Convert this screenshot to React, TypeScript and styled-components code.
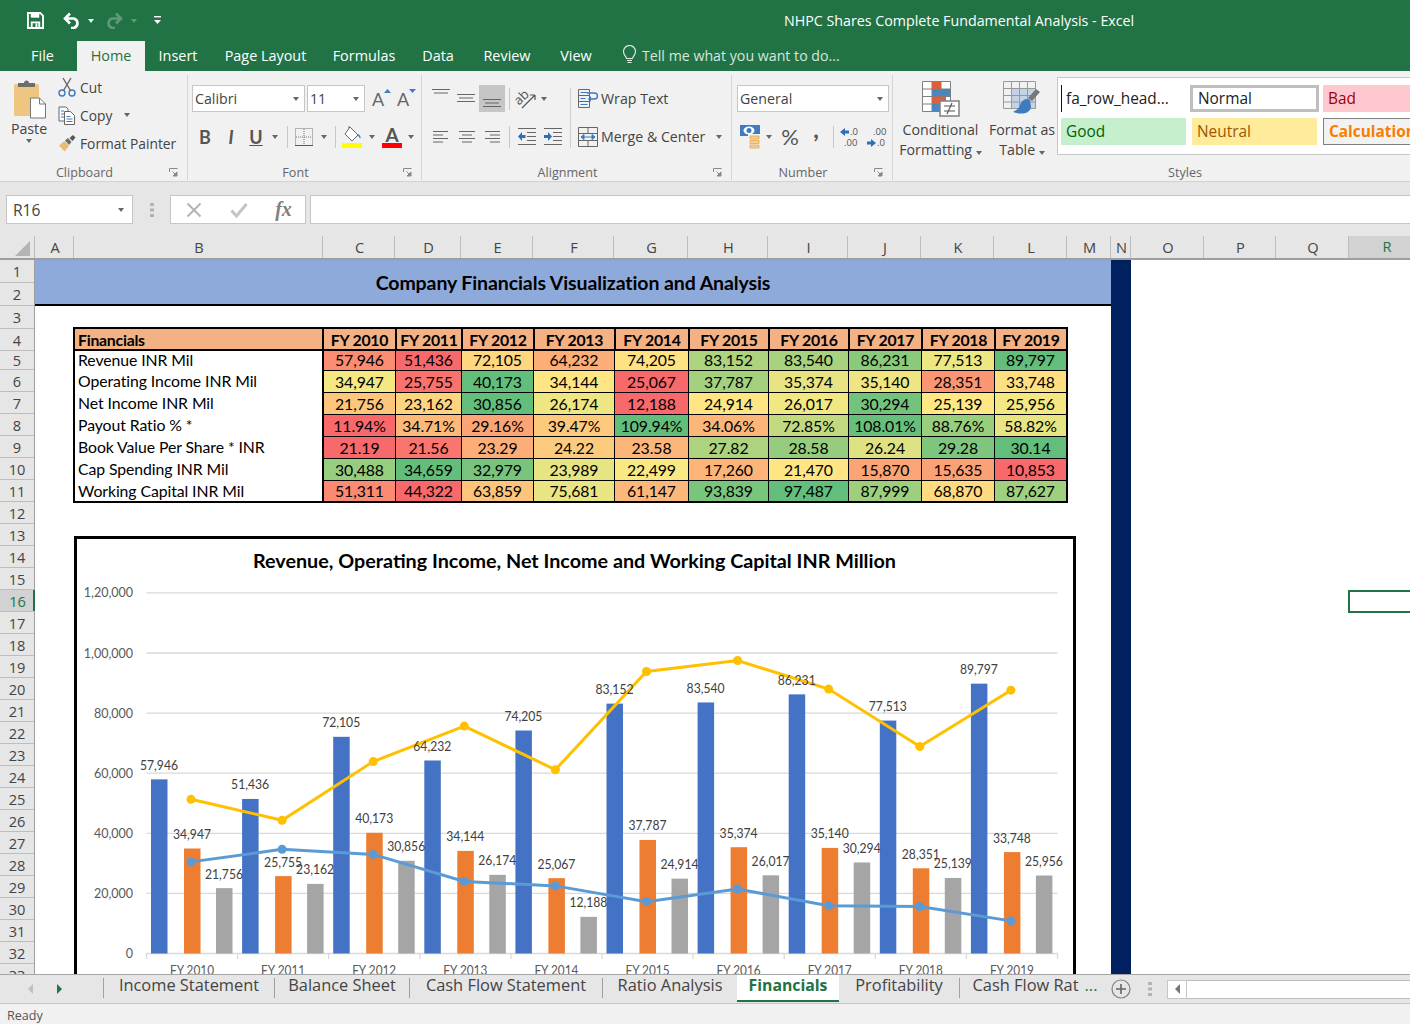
import React from 'react';
import styled, { createGlobalStyle } from 'styled-components';

const calibri = '"Lato", "Liberation Sans", sans-serif';
const segoe = '"Open Sans", "Liberation Sans", sans-serif';
const green = '#217346';

const GlobalStyle = createGlobalStyle`
  html, body { margin: 0; padding: 0; background: #fff; }
  body { font-family: ${segoe}; color: #444; }
  * { box-sizing: border-box; }
`;

const Window = styled.div`
  width: 1410px;
  height: 1024px;
  display: flex;
  flex-direction: column;
  overflow: hidden;
`;

/* title bar + tabs */
const TitleBar = styled.div`
  height: 41px;
  background: ${green};
  display: grid;
  grid-template-columns: 784px 1fr;
  align-items: center;
  color: #fff;
`;
const Qat = styled.div`
  display: flex;
  align-items: center;
  padding-left: 26px;
`;
const QatButton = styled.span<{ $w: number; $ml?: number }>`
  width: ${p => p.$w}px;
  margin-left: ${p => p.$ml ?? 0}px;
  display: flex;
  align-items: center;
  justify-content: center;
`;
const WindowTitle = styled.div`
  font-size: 14.25px;
  white-space: nowrap;
`;
const TabStrip = styled.div`
  height: 30px;
  background: ${green};
  display: flex;
  align-items: stretch;
  padding-left: 8px;
  font-size: 14.4px;
  color: #fff;
`;
const RibbonTab = styled.div<{ $w: number; $active?: boolean }>`
  width: ${p => p.$w}px;
  display: flex;
  align-items: center;
  justify-content: center;
  white-space: nowrap;
  padding-bottom: 2px;
  background: ${p => (p.$active ? '#f1f1f1' : 'transparent')};
  color: ${p => (p.$active ? green : '#fff')};
`;
const TellMe = styled.div`
  display: flex;
  align-items: center;
  gap: 5px;
  margin-left: 16px;
  padding-bottom: 2px;
  font-size: 14.2px;
  color: #d7e6dc;
  white-space: nowrap;
`;

/* ribbon */
const Ribbon = styled.div`
  height: 111px;
  background: #f1f1f1;
  border-bottom: 1px solid #d2d2d2;
  display: flex;
  padding: 4px 0 1px;
  font-size: 14.2px;
  color: #444;
`;
const Group = styled.div<{ $w: number; $last?: boolean }>`
  width: ${p => p.$w}px;
  flex: none;
  display: flex;
  flex-direction: column;
  border-right: ${p => (p.$last ? 'none' : '1px solid #d4d4d4')};
`;
const GroupBody = styled.div`
  flex: 1;
  display: flex;
  min-height: 0;
`;
const GroupFooter = styled.div<{ $w?: number }>`
  height: 16px;
  display: grid;
  grid-template-columns: 1fr 18px;
  align-items: center;
  width: ${p => (p.$w ? `${p.$w}px` : 'auto')};
  font-size: 12.6px;
  color: #666;
  text-align: center;
`;
const Launcher = styled.span`
  display: flex;
  justify-content: flex-start;
`;
const PasteButton = styled.div`
  width: 50px;
  margin-left: 4px;
  display: flex;
  flex-direction: column;
  align-items: center;
  padding-top: 4px;
  font-size: 14.2px;
  line-height: 20px;
`;
const ClipColumn = styled.div`
  display: flex;
  flex-direction: column;
  margin-top: -2px;
  padding: 0 0 0 4px;
  font-size: 13.8px;
`;
const ClipRow = styled.div`
  height: 28px;
  display: flex;
  align-items: center;
  gap: 4px;
  white-space: nowrap;
`;
const Caret = styled.span<{ $gap?: number; $c?: string }>`
  display: inline-block;
  flex: none;
  width: 0;
  height: 0;
  margin-left: ${p => p.$gap ?? 0}px;
  border-left: 3.5px solid transparent;
  border-right: 3.5px solid transparent;
  border-top: 4px solid ${p => p.$c ?? '#666'};
`;
const StackColumn = styled.div<{ $pad: number }>`
  display: flex;
  flex-direction: column;
  padding: 10px 0 0 ${p => p.$pad}px;
`;
const ToolRow = styled.div<{ $top?: number }>`
  height: 27px;
  display: flex;
  align-items: center;
  margin-top: ${p => p.$top ?? 0}px;
`;
const Select = styled.div<{ $w: number }>`
  width: ${p => p.$w}px;
  height: 27px;
  background: #fff;
  border: 1px solid #c6c6c6;
  display: flex;
  align-items: center;
  justify-content: space-between;
  padding: 0 5px 0 2px;
  font-size: 14.2px;
  margin-right: 2px;
`;
const Tool = styled.span<{ $w: number; $on?: boolean; $ml?: number }>`
  width: ${p => p.$w}px;
  height: 27px;
  flex: none;
  margin-left: ${p => p.$ml ?? 0}px;
  display: flex;
  align-items: center;
  justify-content: center;
  background: ${p => (p.$on ? '#c6c6c6' : 'transparent')};
`;
const FontGlyph = styled.span<{ $b?: boolean; $i?: boolean; $u?: boolean; $s?: number; $lift?: number }>`
  font-family: ${calibri};
  font-size: ${p => p.$s ?? 18}px;
  font-weight: ${p => (p.$b ? 700 : 400)};
  font-style: ${p => (p.$i ? 'italic' : 'normal')};
  text-decoration: ${p => (p.$u ? 'underline' : 'none')};
  color: #555;
  margin-bottom: ${p => p.$lift ?? 0}px;
`;
const ResizeGlyph = styled.span`
  display: flex;
  align-items: flex-start;
  gap: 0;
  font-family: ${calibri};
  font-size: 18px;
  line-height: 22px;
  color: #666;
  svg { margin-top: 1px; }
`;
const ColorGlyph = styled.span<{ $bar: string }>`
  width: 20px;
  display: flex;
  flex-direction: column;
  align-items: center;
  font-family: ${calibri};
  font-size: 19px;
  font-weight: 700;
  line-height: 17px;
  color: #555;
  &::after {
    content: '';
    width: 20px;
    height: 5px;
    background: ${p => p.$bar};
  }
`;
const ToolSep = styled.span<{ $w: number }>`
  width: ${p => p.$w}px;
  height: 22px;
  flex: none;
  display: flex;
  justify-content: center;
  &::before {
    content: '';
    width: 1px;
    background: #c8c8c8;
  }
`;
const AlignDivider = styled.span`
  width: 1px;
  height: 60px;
  margin: 13px 7px 0 4px;
  background: #d0d0d0;
  flex: none;
`;
const WideAction = styled.div<{ $top?: number }>`
  height: 27px;
  display: flex;
  align-items: center;
  gap: 3px;
  margin-top: ${p => p.$top ?? 0}px;
  white-space: nowrap;
`;
const BigStyleButton = styled.div<{ $w: number }>`
  width: ${p => p.$w}px;
  flex: none;
  display: flex;
  flex-direction: column;
  align-items: center;
  padding-top: 6px;
  line-height: 20px;
  white-space: nowrap;
  svg { margin-bottom: 3px; }
`;
const Gallery = styled.div`
  margin: 2px 0 0 1px;
  width: 360px;
  height: 78px;
  background: #fff;
  border: 1px solid #c6c6c6;
  display: grid;
  grid-template-columns: 125px 129px 120px;
  grid-auto-rows: 27px;
  column-gap: 4px;
  row-gap: 6px;
  padding: 7px 0 0 3px;
  font-size: 15.4px;
`;
const StyleChip = styled.div<{ $bg?: string; $fg?: string; $border?: string; $bw?: number; $b?: boolean; $inset?: number }>`
  background: ${p => p.$bg ?? 'transparent'};
  color: ${p => p.$fg ?? '#222'};
  border: ${p => (p.$border ? `${p.$bw ?? 1}px solid ${p.$border}` : 'none')};
  font-weight: ${p => (p.$b ? 700 : 400)};
  margin: 0 ${p => p.$inset ?? 0}px;
  display: flex;
  align-items: center;
  padding-left: 5px;
  white-space: nowrap;
  overflow: hidden;
`;
const HeadChip = styled(StyleChip)`
  border-left: 1px solid #111;
  padding-left: 4px;
`;

/* formula bar */
const FormulaBar = styled.div`
  height: 54px;
  background: #e6e6e6;
  display: flex;
  align-items: flex-start;
  padding: 13px 0 0 6px;
`;
const NameBox = styled.div`
  width: 127px;
  height: 29px;
  background: #fff;
  border: 1px solid #c6c6c6;
  display: flex;
  align-items: center;
  justify-content: space-between;
  padding: 0 8px 0 6px;
  font-size: 15.6px;
`;
const Grip = styled.span`
  width: 37px;
  height: 29px;
  display: flex;
  align-items: center;
  justify-content: center;
`;
const SheetGrip = styled(Grip)`
  width: 24px;
  height: 28px;
`;
const FormulaButtons = styled.div`
  width: 136px;
  height: 29px;
  background: #fff;
  border: 1px solid #c6c6c6;
  display: grid;
  grid-template-columns: 45px 45px 45px;
  align-items: center;
  justify-items: center;
`;
const FxGlyph = styled.span`
  font-family: "Liberation Serif", serif;
  font-style: italic;
  font-weight: 700;
  font-size: 20px;
  color: #808080;
`;
const FormulaInput = styled.div`
  flex: 1;
  height: 29px;
  margin-left: 4px;
  background: #fff;
  border: 1px solid #c6c6c6;
  border-right: none;
`;

/* column + row headers */
const ColumnHeader = styled.div`
  height: 24px;
  background: #e6e6e6;
  display: flex;
  overflow: hidden;
  border-bottom: 2px solid #9f9f9f;
`;
const Corner = styled.div`
  width: 35px;
  flex: none;
  display: flex;
  align-items: flex-end;
  justify-content: flex-end;
  padding: 0 4px 2px 0;
  border-right: 1px solid #bdbdbd;
`;
const ColCell = styled.div<{ $w: number; $sel?: boolean }>`
  width: ${p => p.$w}px;
  flex: none;
  height: 24px;
  display: flex;
  align-items: center;
  justify-content: center;
  padding: 0 0 2px 2px;
  font-size: 14.6px;
  color: ${p => (p.$sel ? green : '#444')};
  background: ${p => (p.$sel ? '#d2d2d2' : 'transparent')};
  border-right: 1px solid #bdbdbd;
  border-bottom: ${p => (p.$sel ? `2px solid ${green}` : 'none')};
`;
const SheetBody = styled.div`
  height: 714px;
  display: flex;
  overflow: hidden;
  background: #fff;
`;
const RowHeaders = styled.div`
  width: 35px;
  flex: none;
  background: #e6e6e6;
  border-right: 1px solid #9f9f9f;
`;
const RowCell = styled.div<{ $h: number; $sel?: boolean }>`
  height: ${p => p.$h}px;
  display: flex;
  align-items: center;
  justify-content: center;
  font-size: 14.6px;
  border-bottom: 1px solid #bdbdbd;
  color: ${p => (p.$sel ? green : '#444')};
  background: ${p => (p.$sel ? '#d2d2d2' : 'transparent')};
  box-shadow: ${p => (p.$sel ? `inset -2px 0 0 ${green}` : 'none')};
  margin-right: ${p => (p.$sel ? '-1px' : '0')};
`;
const Canvas = styled.div`
  flex: 1;
  position: relative;
  display: grid;
  grid-template-columns: 1076px 20px 1fr;
`;
const MainColumn = styled.div`
  display: flex;
  flex-direction: column;
  min-width: 0;
`;
const NavyStrip = styled.div`
  background: #002060;
`;
const Banner = styled.div`
  height: 46px;
  background: #8eaadb;
  border-bottom: 2px solid #000;
  display: flex;
  align-items: center;
  justify-content: center;
  font-family: ${calibri};
  font-weight: 700;
  font-size: 19.5px;
  letter-spacing: -0.1px;
  color: #000;
`;
const FinTable = styled.div`
  margin: 21px 0 0 38px;
  width: 995px;
  border: 2px solid #000;
  display: grid;
  grid-template-columns: 247px 73px 66px 72px 81px 74px 80px 80px 73px 73px 72px;
  grid-template-rows: 22px 19px repeat(5, 22px) 21px;
  font-family: ${calibri};
  font-size: 15.8px;
  letter-spacing: -0.08px;
  color: #000;
`;
const HeadCell = styled.div<{ $first?: boolean }>`
  background: #f4b183;
  font-weight: 700;
  letter-spacing: -0.25px;
  display: flex;
  align-items: center;
  justify-content: ${p => (p.$first ? 'flex-start' : 'center')};
  padding-left: ${p => (p.$first ? '3px' : '0')};
  border-left: ${p => (p.$first ? 'none' : '2px solid #000')};
  border-bottom: 2px solid #000;
  white-space: nowrap;
`;
const LabelCell = styled.div<{ $top?: boolean }>`
  display: flex;
  align-items: center;
  padding: 0 0 ${p => (p.$top ? '3px' : '1px')} 3px;
  white-space: nowrap;
`;
const ValueCell = styled.div<{ $top?: boolean; $wide?: boolean }>`
  display: flex;
  align-items: center;
  justify-content: center;
  padding-bottom: ${p => (p.$top ? '3px' : '1px')};
  border-left: ${p => (p.$wide ? '2px' : '1px')} solid #000;
  border-top: ${p => (p.$top ? 'none' : '1px solid #000')};
  white-space: nowrap;
`;
const ChartFrame = styled.div`
  margin: 33px 0 0 39px;
  width: 1002px;
  height: 470px;
  flex: none;
  border: 3px solid #000;
  background: #fff;
  svg { display: block; }
`;
const ActiveCell = styled.div`
  position: absolute;
  left: 1313px;
  top: 330px;
  width: 80px;
  height: 23px;
  border: 2px solid ${green};
`;

/* sheet tabs + status */
const SheetTabs = styled.div`
  height: 30px;
  background: #e6e6e6;
  border-top: 1px solid #a6a6a6;
  border-bottom: 1px solid #c6c6c6;
  display: flex;
  align-items: flex-start;
  font-size: 16.4px;
  color: #444;
`;
const TabNav = styled.div`
  width: 103px;
  height: 28px;
  flex: none;
  display: flex;
  align-items: center;
  padding-left: 28px;
  gap: 24px;
`;
const NavArrow = styled.span<{ $dir: 'left' | 'right'; $c: string }>`
  width: 0;
  height: 0;
  border-top: 5px solid transparent;
  border-bottom: 5px solid transparent;
  ${p => (p.$dir === 'left' ? `border-right: 5px solid ${p.$c};` : `border-left: 5px solid ${p.$c};`)}
`;
const SheetTab = styled.div<{ $w: number; $active?: boolean; $plain?: boolean; $shift?: number }>`
  width: ${p => p.$w}px;
  height: ${p => (p.$active ? '27px' : '20px')};
  margin-top: ${p => (p.$active ? '0' : '3px')};
  flex: none;
  display: flex;
  align-items: center;
  justify-content: center;
  white-space: nowrap;
  padding: ${p => (p.$active ? '0 0 6px' : `0 0 7px ${p.$shift ?? 0}px`)};
  border-left: ${p => (p.$active || p.$plain ? 'none' : '1px solid #a0a0a0')};
  background: ${p => (p.$active ? '#fff' : 'transparent')};
  color: ${p => (p.$active ? green : '#444')};
  font-weight: ${p => (p.$active ? 700 : 400)};
  font-size: ${p => (p.$active ? '15.8px' : '16.4px')};
  border-bottom: ${p => (p.$active ? `2px solid ${green}` : 'none')};
`;
const MoreDots = styled.span`
  color: ${green};
  margin-left: 6px;
`;
const AddSheet = styled.span`
  width: 34px;
  height: 28px;
  flex: none;
  display: flex;
  align-items: center;
  justify-content: center;
`;
const ScrollArea = styled.div`
  flex: 1;
  display: flex;
  align-items: center;
  height: 28px;
`;
const ScrollLeft = styled.span`
  width: 20px;
  height: 19px;
  margin-left: 5px;
  background: #fff;
  border: 1px solid #c6c6c6;
  display: flex;
  align-items: center;
  justify-content: center;
`;
const ScrollTrack = styled.span`
  flex: 1;
  height: 19px;
  background: #fff;
  border-top: 1px solid #bdbdbd;
  border-bottom: 1px solid #bdbdbd;
`;
const StatusBar = styled.div`
  height: 20px;
  background: #f1f1f1;
  display: flex;
  align-items: center;
  padding: 3px 0 0 7px;
  font-size: 12.6px;
  color: #555;
`;

/* ---------- icons ---------- */
const Save = () => (
  <svg width="17" height="17" viewBox="0 0 18 18">
    <path d="M1 1h13l3 3v13H1z" fill="none" stroke="#fff" strokeWidth="2" />
    <rect x="4" y="1" width="9" height="5" fill="#fff" />
    <path d="M5 16v-5h8v5" fill="none" stroke="#fff" strokeWidth="2" />
    <rect x="9" y="12" width="2" height="4" fill="#fff" />
  </svg>
);
const Undo = ({ c, flip }: { c: string; flip?: boolean }) => (
  <svg width="19" height="17" viewBox="0 0 19 17">
    <g transform={flip ? 'translate(19 0) scale(-1 1)' : undefined}>
      <path d="M7 1.500 2 6.500l5 5" fill="none" stroke={c} strokeWidth="2.600" />
      <path d="M3 6.500h8a5 5 0 0 1 0 9.500H8" fill="none" stroke={c} strokeWidth="2.600" />
    </g>
  </svg>
);
const Customize = () => (
  <svg width="9" height="9" viewBox="0 0 9 9">
    <rect x="1" y="0" width="7" height="1.400" fill="#fff" />
    <path d="M1 4h7L4.500 8z" fill="#fff" />
  </svg>
);
const Bulb = () => (
  <svg width="15" height="20" viewBox="0 0 15 20">
    <path d="M4.500 13.500C4 11 1.500 10 1.500 6.500a6 6 0 0 1 12 0c0 3.500-2.500 4.500-3 7z" fill="none" stroke="#e4efe8" strokeWidth="1.100" />
    <path d="M5 15.500h5M5.500 17.500h4" stroke="#e4efe8" strokeWidth="1.100" />
  </svg>
);
const PasteIcon = () => (
  <svg width="36" height="40" viewBox="0 0 36 40">
    <rect x="3" y="5" width="25" height="32" rx="1.500" fill="#eec682" />
    <path d="M7 8V4h6a2.500 2.500 0 0 1 5 0h6v4z" fill="#6d6d6d" />
    <path d="M19.500 19h9l6 6v14h-15z" fill="#fff" stroke="#777" />
    <path d="M28.500 19v6h6" fill="none" stroke="#777" />
  </svg>
);
const Scissors = () => (
  <svg width="18" height="20" viewBox="0 0 18 20">
    <circle cx="4" cy="16" r="3" fill="none" stroke="#3f7cbf" strokeWidth="1.400" />
    <circle cx="14" cy="16" r="3" fill="none" stroke="#3f7cbf" strokeWidth="1.400" />
    <path d="M5.500 13.500 13 1M12.500 13.500 5 1" stroke="#666" strokeWidth="1.400" fill="none" />
  </svg>
);
const CopyIcon = () => (
  <svg width="18" height="19" viewBox="0 0 18 19">
    <path d="M1 1h7l2 2v12H1z" fill="#fff" stroke="#666" />
    <path d="M6.500 5.500h6l4 4v9h-10z" fill="#fff" stroke="#666" />
    <path d="M3 5h3M3 8h3M3 11h3M8.500 10.500h4M8.500 13h6M8.500 15.500h6" stroke="#3f7cbf" />
  </svg>
);
const Painter = () => (
  <svg width="18" height="18" viewBox="0 0 18 18">
    <path d="M1 11.500 6.500 7l4.500 5-4.500 5.500z" fill="#e9bb78" />
    <path d="m7 6.500 3-2.500 3.500 4-2.500 3z" fill="#6d6d6d" />
    <path d="m11.500 4 3.500-3 2.500 2.500-3 3.500z" fill="#555" />
  </svg>
);
const BorderIcon = () => (
  <svg width="18" height="18" viewBox="0 0 18 18">
    <rect x="0.500" y="0.500" width="17" height="17" fill="none" stroke="#777" strokeDasharray="1 1" />
    <path d="M9 1v16M1 9h16" stroke="#777" strokeDasharray="1 1" />
    <path d="M0 17.500h18" stroke="#555" />
  </svg>
);
const FillIcon = () => (
  <svg width="22" height="22" viewBox="0 0 22 22">
    <path d="m9 1 8 8-6 6-7-7z" fill="#fff" stroke="#666" />
    <path d="M8 2V0" stroke="#666" />
    <path d="M17 8c2 1 3 3 2.500 4.500-1-.5-2-2-2.500-3z" fill="#3f7cbf" />
    <rect x="1" y="17" width="20" height="5" fill="#ffff00" />
  </svg>
);
const Lines = ({ rows, top = 0 }: { rows: [number, number][]; top?: number }) => (
  <svg width="20" height="22" viewBox="0 0 20 22">
    {rows.map(([x, w], i) => (
      <rect key={i} x={x} y={top + i * 3.500} width={w} height="1" fill="#666" />
    ))}
  </svg>
);
const ResizeArrow = ({ up }: { up: boolean }) => (
  <svg width="7" height="4" viewBox="0 0 7 4">
    <path d={up ? 'M0 4l3.500-4 3.500 4z' : 'M0 0l3.500 4 3.500-4z'} fill="#3f7cbf" />
  </svg>
);
const Orientation = () => (
  <svg width="24" height="22" viewBox="0 0 24 22">
    <g transform="rotate(-45 9 11)">
      <text x="9" y="13" fontFamily={segoe} fontSize="13" fill="#555" textAnchor="middle">ab</text>
    </g>
    <path d="M8 20 21 7M21 7h-5M21 7v5" stroke="#555" strokeWidth="1.200" fill="none" />
  </svg>
);
const Indent = ({ out }: { out: boolean }) => (
  <svg width="20" height="20" viewBox="0 0 20 20">
    <path d="M1 1.500h18M10 5.500h9M10 9.500h9M10 13.500h9M1 17.500h18" stroke="#666" />
    {out
      ? <path d="M1 9.500 5 5v3h3.500v3H5v3z" fill="#2f6fb5" />
      : <path d="M9 9.500 5 5v3H1v3h4v3z" fill="#2f6fb5" />}
  </svg>
);
const WrapIcon = () => (
  <svg width="20" height="20" viewBox="0 0 20 20">
    <path d="M.5 .5h11v18H.5zM.5 6.500h11M.5 12.500h11" fill="none" stroke="#666" />
    <path d="M2.500 3.500h7M2.500 9.500h5M2.500 15.500h7" stroke="#3f7cbf" />
    <path d="M9 4h7.500a2.500 2.500 0 0 1 0 6H12" fill="none" stroke="#3f7cbf" strokeWidth="1.500" />
    <path d="m13 7-3 3 3 3z" fill="#3f7cbf" />
  </svg>
);
const MergeIcon = () => (
  <svg width="20" height="20" viewBox="0 0 20 20">
    <path d="M.5 .5h19v19H.5zM.5 6.500h19M.5 13.500h19M10 .5v6M10 13.500v6" fill="none" stroke="#666" />
    <path d="M3 10h14M3 10l3-2.500v5zM17 10l-3-2.500v5z" stroke="#3f7cbf" fill="#3f7cbf" />
  </svg>
);
const MoneyIcon = () => (
  <svg width="21" height="26" viewBox="0 0 21 26">
    <rect x="0" y="1" width="20" height="11" fill="#3f7cbf" />
    <ellipse cx="9" cy="6.500" rx="5.500" ry="4" fill="#fff" />
    <circle cx="9" cy="6.500" r="2.500" fill="#3f7cbf" />
    <rect x="8" y="10" width="13" height="16" fill="#f1f1f1" />
    <path d="M10 12h9v3h-9zM10 16.500h9v3h-9zM10 21h9v3h-9z" fill="#f4cf8e" stroke="#e3a850" strokeWidth=".8" />
  </svg>
);
const Decimals = ({ more }: { more: boolean }) => (
  <svg width="24" height="24" viewBox="0 0 24 24" fontFamily={segoe} fontSize="9.500" fill="#555">
    {more ? (
      <>
        <path d="M1 7l5-4v2.500h4v3H6V11z" fill="#2f6fb5" />
        <text x="11" y="10">.0</text>
        <text x="5" y="21">.00</text>
      </>
    ) : (
      <>
        <text x="8" y="10">.00</text>
        <path d="M11 18l-5-4v2.500H2v3h4V22z" fill="#2f6fb5" />
        <text x="12" y="21">.0</text>
      </>
    )}
  </svg>
);
const CondIcon = () => (
  <svg width="38" height="36" viewBox="0 0 38 36">
    <path d="M.5 .5h28v30H.5zM.5 8h28M.5 15.500h28M.5 23h28M10 .5v30M19 .5v30" fill="#fff" stroke="#808080" />
    <rect x="10" y="1" width="9" height="7" fill="#d9613c" />
    <rect x="10" y="8" width="18" height="7.500" fill="#4a86c0" />
    <rect x="10" y="15.500" width="14" height="7.500" fill="#d9613c" />
    <rect x="10" y="23" width="8" height="7.500" fill="#4a86c0" />
    <rect x="18" y="20" width="19" height="15" fill="#fff" stroke="#808080" strokeWidth="1.500" />
    <path d="M22 25h11M22 30h11M30 22l-5 11" stroke="#555" strokeWidth="1.200" />
  </svg>
);
const TableIcon = () => (
  <svg width="38" height="36" viewBox="0 0 38 36">
    <rect x="9" y="8" width="24" height="20" fill="#c3d3e7" />
    <path d="M.5 .5h32v27H.5zM.5 7.500h32M.5 14.500h32M.5 21h32M8.500 .5v27M16.500 .5v27M24.500 .5v27" fill="none" stroke="#999" />
    <path d="m25 17 8-9 4 3-8 9z" fill="#777" />
    <path d="M27 19c-5-3-9 2-10 5-1 4-5 6-7 7 8 3 17 2 18-5z" fill="#3f7cbf" />
  </svg>
);
const LauncherIcon = () => (
  <svg width="9" height="9" viewBox="0 0 9 9">
    <path d="M.5 4V.5h8" fill="none" stroke="#888" />
    <path d="M3.500 3.500 7.500 7.500M8 4v4H4z" stroke="#888" fill="#888" />
  </svg>
);
const Cross = () => (
  <svg width="16" height="16" viewBox="0 0 16 16">
    <path d="M1.500 1.500 14.500 14.500M14.500 1.500 1.500 14.500" stroke="#b3b3b3" strokeWidth="2" />
  </svg>
);
const Check = () => (
  <svg width="18" height="16" viewBox="0 0 18 16">
    <path d="M1.500 8.500 6.500 14 16.500 2" fill="none" stroke="#c4c4c4" strokeWidth="3" />
  </svg>
);
const GripDots = () => (
  <svg width="4" height="14" viewBox="0 0 4 14">
    <path d="M0 0h4v3H0zM0 5.500h4v3H0zM0 11h4v3H0z" fill="#b3b3b3" />
  </svg>
);
const SelectAll = () => (
  <svg width="15" height="15" viewBox="0 0 15 15">
    <path d="M15 0v15H0z" fill="#b4b4b4" />
  </svg>
);
const PlusCircle = () => (
  <svg width="20" height="20" viewBox="0 0 20 20">
    <circle cx="10" cy="10" r="9" fill="none" stroke="#808080" strokeWidth="1.200" />
    <path d="M10 5v10M5 10h10" stroke="#666" strokeWidth="1.600" />
  </svg>
);

/* ---------- data ---------- */
const years = ['FY 2010', 'FY 2011', 'FY 2012', 'FY 2013', 'FY 2014', 'FY 2015', 'FY 2016', 'FY 2017', 'FY 2018', 'FY 2019'];
const revenue = [57946, 51436, 72105, 64232, 74205, 83152, 83540, 86231, 77513, 89797];
const operating = [34947, 25755, 40173, 34144, 25067, 37787, 35374, 35140, 28351, 33748];
const netIncome = [21756, 23162, 30856, 26174, 12188, 24914, 26017, 30294, 25139, 25956];
const payout = [11.94, 34.71, 29.16, 39.47, 109.94, 34.06, 72.85, 108.01, 88.76, 58.82];
const bookValue = [21.19, 21.56, 23.29, 24.22, 23.58, 27.82, 28.58, 26.24, 29.28, 30.14];
const capSpending = [30488, 34659, 32979, 23989, 22499, 17260, 21470, 15870, 15635, 10853];
const workingCapital = [51311, 44322, 63859, 75681, 61147, 93839, 97487, 87999, 68870, 87627];

const group3 = (n: number) => n.toLocaleString('en-US');
const rows: { label: string; values: number[]; fmt: (n: number) => string }[] = [
  { label: 'Revenue INR Mil', values: revenue, fmt: group3 },
  { label: 'Operating Income INR Mil', values: operating, fmt: group3 },
  { label: 'Net Income INR Mil', values: netIncome, fmt: group3 },
  { label: 'Payout Ratio % *', values: payout, fmt: n => `${n.toFixed(2)}%` },
  { label: 'Book Value Per Share * INR', values: bookValue, fmt: n => n.toFixed(2) },
  { label: 'Cap Spending INR Mil', values: capSpending, fmt: group3 },
  { label: 'Working Capital INR Mil', values: workingCapital, fmt: group3 },
];

// red-yellow-green colour scale, like Excel's conditional format
function heat (v: number, values: number[]): string {
  const s = [...values].sort((a, b) => a - b);
  const mid = (s[4] + s[5]) / 2;
  const lo = [248, 105, 107];
  const m = [255, 235, 132];
  const hi = [99, 190, 123];
  const t = v < mid ? (v - s[0]) / (mid - s[0]) : (v - mid) / (s[9] - mid);
  const [a, b] = v < mid ? [lo, m] : [m, hi];
  const c = a.map((x, i) => Math.round(x + (b[i] - x) * t));
  return `rgb(${c.join(',')})`;
}

const columns: [string, number][] = [
  ['A', 39], ['B', 249], ['C', 72], ['D', 66], ['E', 72], ['F', 81], ['G', 74], ['H', 80], ['I', 80], ['J', 73],
  ['K', 73], ['L', 73], ['M', 44], ['N', 20], ['O', 73], ['P', 72], ['Q', 73], ['R', 75],
];
const rowHeights = [23, 23, 23, 22, 19];
for (let i = 6; i <= 33; i++) rowHeights.push(22);

/* ---------- chart ---------- */
const yOf = (v: number) => 953.5 - v * 0.003005;
const step = 91.1;
const ticks = [0, 20000, 40000, 60000, 80000, 100000, 120000];
const tickText = ['0', '20,000', '40,000', '60,000', '80,000', '1,00,000', '1,20,000'];
const lineOf = (vals: number[]) => vals.map((v, i) => `${191 + step * i},${yOf(v)}`).join(' ');

const Chart = () => (
  <svg width="996" height="464" viewBox="77 539 996 464" fontFamily={calibri}>
    <text x="574.500" y="568" textAnchor="middle" fontWeight="700" fontSize="18.500" fill="#000" textLength="643" lengthAdjust="spacingAndGlyphs">
      Revenue, Operating Income, Net Income and Working Capital INR Million
    </text>
    {ticks.map((t, i) => (
      <g key={t}>
        <line x1="146.500" x2="1057.500" y1={yOf(t)} y2={yOf(t)} stroke="#d9d9d9" strokeWidth="1.300" />
        <text x="133" y={yOf(t) + 4.500} textAnchor="end" fontSize="12.500" fill="#595959">{tickText[i]}</text>
      </g>
    ))}
    {Array.from({ length: 11 }, (_, i) => (
      <line key={i} x1={146.5 + step * i} x2={146.5 + step * i} y1="953" y2="959" stroke="#d9d9d9" strokeWidth="1.300" />
    ))}
    {years.map((y, i) => (
      <text key={y} x={192 + step * i} y="975" textAnchor="middle" fontSize="12.500" fill="#595959" textLength="44" lengthAdjust="spacingAndGlyphs">{y}</text>
    ))}
    {years.map((y, i) => (
      <g key={y}>
        <rect x={151 + step * i} y={yOf(revenue[i])} width="16.500" height={953.5 - yOf(revenue[i])} fill="#4472c4" />
        <rect x={184 + step * i} y={yOf(operating[i])} width="16.500" height={953.5 - yOf(operating[i])} fill="#ed7d31" />
        <rect x={216 + step * i} y={yOf(netIncome[i])} width="16.500" height={953.5 - yOf(netIncome[i])} fill="#a5a5a5" />
      </g>
    ))}
    <polyline points={lineOf(capSpending)} fill="none" stroke="#5b9bd5" strokeWidth="3" />
    {capSpending.map((v, i) => <circle key={i} cx={191 + step * i} cy={yOf(v)} r="4.500" fill="#5b9bd5" />)}
    <polyline points={lineOf(workingCapital)} fill="none" stroke="#ffc000" strokeWidth="3" />
    {workingCapital.map((v, i) => <circle key={i} cx={191 + step * i} cy={yOf(v)} r="4.500" fill="#ffc000" />)}
    {[{ v: revenue, x: 159 }, { v: operating, x: 192 }, { v: netIncome, x: 224 }].map(s =>
      s.v.map((v, i) => (
        <text key={`${s.x}-${i}`} x={s.x + step * i} y={yOf(v) - 9.500} textAnchor="middle" fontSize="13" fill="#404040" textLength="38" lengthAdjust="spacingAndGlyphs">
          {group3(v)}
        </text>
      ))
    )}
  </svg>
);

export default function App (): React.ReactElement {
  return (
    <Window>
      <GlobalStyle />
      <TitleBar>
        <Qat>
          <QatButton $w={18}><Save /></QatButton>
          <QatButton $w={19} $ml={19}><Undo c="#fff" /></QatButton>
          <QatButton $w={18}><Caret $c="#dfe" /></QatButton>
          <QatButton $w={26}><Undo c="#5f9a76" flip /></QatButton>
          <QatButton $w={16}><Caret $c="#5f9a76" /></QatButton>
          <QatButton $w={30}><Customize /></QatButton>
        </Qat>
        <WindowTitle>NHPC Shares Complete Fundamental Analysis - Excel</WindowTitle>
      </TitleBar>
      <TabStrip>
        <RibbonTab $w={69}>File</RibbonTab>
        <RibbonTab $w={68} $active>Home</RibbonTab>
        <RibbonTab $w={66}>Insert</RibbonTab>
        <RibbonTab $w={109}>Page Layout</RibbonTab>
        <RibbonTab $w={88}>Formulas</RibbonTab>
        <RibbonTab $w={60}>Data</RibbonTab>
        <RibbonTab $w={78}>Review</RibbonTab>
        <RibbonTab $w={60}>View</RibbonTab>
        <TellMe><Bulb />Tell me what you want to do...</TellMe>
      </TabStrip>

      <Ribbon>
        <Group $w={188}>
          <GroupBody>
            <PasteButton>
              <PasteIcon />
              <span>Paste</span>
              <Caret />
            </PasteButton>
            <ClipColumn>
              <ClipRow><Scissors />Cut</ClipRow>
              <ClipRow><CopyIcon />Copy<Caret $gap={8} /></ClipRow>
              <ClipRow><Painter />Format Painter</ClipRow>
            </ClipColumn>
          </GroupBody>
          <GroupFooter><span>Clipboard</span><Launcher><LauncherIcon /></Launcher></GroupFooter>
        </Group>

        <Group $w={234}>
          <GroupBody>
            <StackColumn $pad={4}>
              <ToolRow>
                <Select $w={113}>Calibri<Caret /></Select>
                <Select $w={58}>11<Caret /></Select>
                <Tool $w={25} $ml={2}><ResizeGlyph>A<ResizeArrow up /></ResizeGlyph></Tool>
                <Tool $w={25}><ResizeGlyph>A<ResizeArrow up={false} /></ResizeGlyph></Tool>
              </ToolRow>
              <ToolRow $top={11}>
                <Tool $w={26}><FontGlyph $b>B</FontGlyph></Tool>
                <Tool $w={26}><FontGlyph $b $i>I</FontGlyph></Tool>
                <Tool $w={24}><FontGlyph $b $u>U</FontGlyph></Tool>
                <Tool $w={14}><Caret /></Tool>
                <ToolSep $w={10} />
                <Tool $w={24}><BorderIcon /></Tool>
                <Tool $w={16}><Caret /></Tool>
                <ToolSep $w={6} />
                <Tool $w={28}><FillIcon /></Tool>
                <Tool $w={12}><Caret /></Tool>
                <Tool $w={28}><ColorGlyph $bar="#ff0000">A</ColorGlyph></Tool>
                <Tool $w={10}><Caret /></Tool>
              </ToolRow>
            </StackColumn>
          </GroupBody>
          <GroupFooter><span>Font</span><Launcher><LauncherIcon /></Launcher></GroupFooter>
        </Group>

        <Group $w={310}>
          <GroupBody>
            <StackColumn $pad={6}>
              <ToolRow>
                <Tool $w={25}><Lines top={1} rows={[[1, 18], [3, 14]]} /></Tool>
                <Tool $w={26}><Lines top={6} rows={[[1, 18], [3, 14], [1, 18]]} /></Tool>
                <Tool $w={26} $on><Lines top={11} rows={[[1, 18], [3, 14], [1, 18]]} /></Tool>
                <ToolSep $w={8} />
                <Tool $w={26}><Orientation /></Tool>
                <Tool $w={10}><Caret /></Tool>
              </ToolRow>
              <ToolRow $top={11}>
                <Tool $w={26}><Lines top={5} rows={[[2, 15], [2, 10], [2, 15], [2, 10]]} /></Tool>
                <Tool $w={25}><Lines top={5} rows={[[2, 16], [5, 10], [2, 16], [5, 10]]} /></Tool>
                <Tool $w={26}><Lines top={5} rows={[[3, 15], [8, 10], [3, 15], [8, 10]]} /></Tool>
                <ToolSep $w={8} />
                <Tool $w={27}><Indent out /></Tool>
                <Tool $w={26}><Indent out={false} /></Tool>
              </ToolRow>
            </StackColumn>
            <AlignDivider />
            <StackColumn $pad={0}>
              <WideAction><WrapIcon />Wrap Text</WideAction>
              <WideAction $top={11}><MergeIcon />Merge &amp; Center<Caret $gap={8} /></WideAction>
            </StackColumn>
          </GroupBody>
          <GroupFooter><span>Alignment</span><Launcher><LauncherIcon /></Launcher></GroupFooter>
        </Group>

        <Group $w={161}>
          <GroupBody>
            <StackColumn $pad={5}>
              <ToolRow><Select $w={152}>General<Caret /></Select></ToolRow>
              <ToolRow $top={11}>
                <Tool $w={26}><MoneyIcon /></Tool>
                <Tool $w={12}><Caret /></Tool>
                <Tool $w={26} $ml={2}><FontGlyph $s={22}>%</FontGlyph></Tool>
                <Tool $w={26}><FontGlyph $s={24} $b $lift={16}>,</FontGlyph></Tool>
                <ToolSep $w={8} />
                <Tool $w={27}><Decimals more /></Tool>
                <Tool $w={26}><Decimals more={false} /></Tool>
              </ToolRow>
            </StackColumn>
          </GroupBody>
          <GroupFooter><span>Number</span><Launcher><LauncherIcon /></Launcher></GroupFooter>
        </Group>

        <Group $w={517} $last>
          <GroupBody>
            <BigStyleButton $w={95}>
              <CondIcon />
              <span>Conditional</span>
              <span>Formatting <Caret /></span>
            </BigStyleButton>
            <BigStyleButton $w={68}>
              <TableIcon />
              <span>Format as</span>
              <span>Table <Caret /></span>
            </BigStyleButton>
            <Gallery>
              <HeadChip>fa_row_head...</HeadChip>
              <StyleChip $border="#bfbfbf" $bw={3}>Normal</StyleChip>
              <StyleChip $bg="#ffc7ce" $fg="#9c0006">Bad</StyleChip>
              <StyleChip $bg="#c6efce" $fg="#006100">Good</StyleChip>
              <StyleChip $bg="#ffeb9c" $fg="#9c5700" $inset={2}>Neutral</StyleChip>
              <StyleChip $bg="#f2f2f2" $fg="#fa7d00" $border="#7f7f7f" $b>Calculation</StyleChip>
            </Gallery>
          </GroupBody>
          <GroupFooter $w={602}><span>Styles</span></GroupFooter>
        </Group>
      </Ribbon>

      <FormulaBar>
        <NameBox>R16<Caret /></NameBox>
        <Grip><GripDots /></Grip>
        <FormulaButtons>
          <Cross />
          <Check />
          <FxGlyph>fx</FxGlyph>
        </FormulaButtons>
        <FormulaInput />
      </FormulaBar>

      <ColumnHeader>
        <Corner><SelectAll /></Corner>
        {columns.map(([name, w]) => <ColCell key={name} $w={w} $sel={name === 'R'}>{name}</ColCell>)}
      </ColumnHeader>

      <SheetBody>
        <RowHeaders>
          {rowHeights.map((h, i) => <RowCell key={i} $h={h} $sel={i === 15}>{i + 1}</RowCell>)}
        </RowHeaders>
        <Canvas>
          <MainColumn>
            <Banner>Company Financials Visualization and Analysis</Banner>
            <FinTable>
              <HeadCell $first>Financials</HeadCell>
              {years.map(y => <HeadCell key={y}>{y}</HeadCell>)}
              {rows.map((r, ri) => (
                <React.Fragment key={r.label}>
                  <LabelCell $top={ri === 0}>{r.label}</LabelCell>
                  {r.values.map((v, i) => (
                    <ValueCell key={i} $top={ri === 0} $wide={i === 0} style={{ background: heat(v, r.values) }}>{r.fmt(v)}</ValueCell>
                  ))}
                </React.Fragment>
              ))}
            </FinTable>
            <ChartFrame><Chart /></ChartFrame>
          </MainColumn>
          <NavyStrip />
          <div />
          <ActiveCell />
        </Canvas>
      </SheetBody>

      <SheetTabs>
        <TabNav><NavArrow $dir="left" $c="#c0c0c0" /><NavArrow $dir="right" $c={green} /></TabNav>
        <SheetTab $w={171}>Income Statement</SheetTab>
        <SheetTab $w={135}>Balance Sheet</SheetTab>
        <SheetTab $w={193}>Cash Flow Statement</SheetTab>
        <SheetTab $w={135}>Ratio Analysis</SheetTab>
        <SheetTab $w={102} $active>Financials</SheetTab>
        <SheetTab $w={120} $plain>Profitability</SheetTab>
        <SheetTab $w={145} $shift={6}>Cash Flow Rat<MoreDots>...</MoreDots></SheetTab>
        <AddSheet><PlusCircle /></AddSheet>
        <SheetGrip><GripDots /></SheetGrip>
        <ScrollArea>
          <ScrollLeft><NavArrow $dir="left" $c="#777" /></ScrollLeft>
          <ScrollTrack />
        </ScrollArea>
      </SheetTabs>
      <StatusBar>Ready</StatusBar>
    </Window>
  );
}
